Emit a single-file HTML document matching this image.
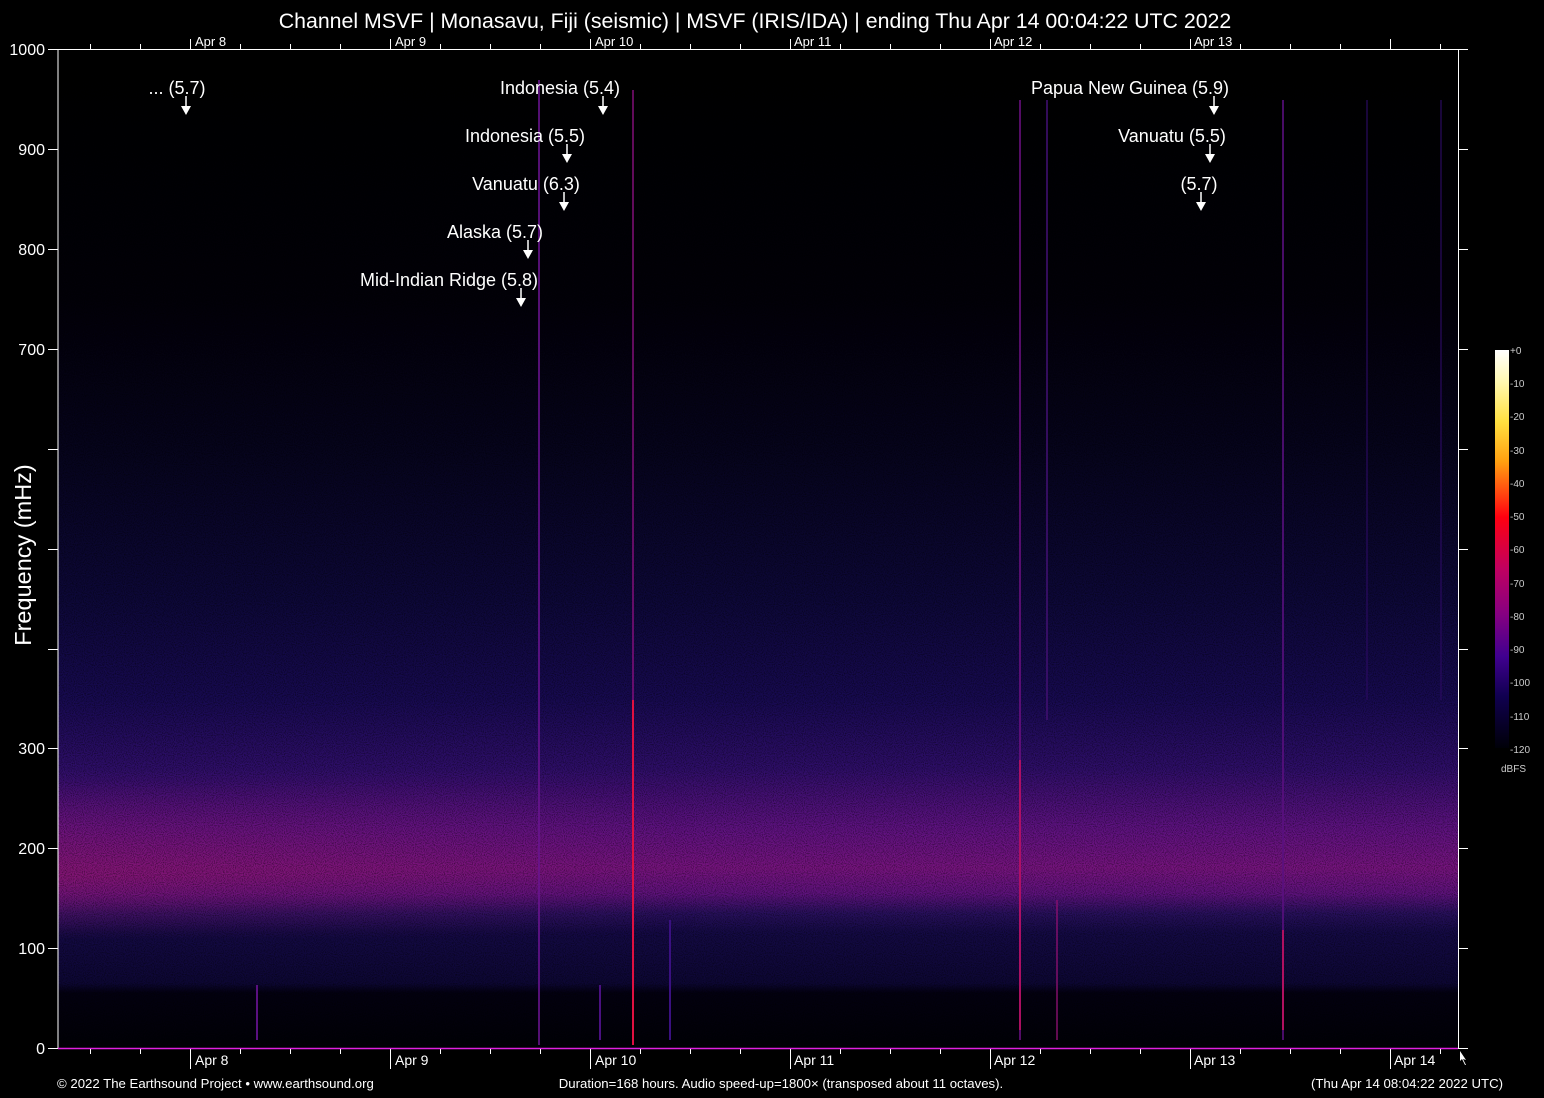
<!DOCTYPE html>
<html><head><meta charset="utf-8"><style>
html,body{margin:0;padding:0;background:#000;width:1544px;height:1098px;overflow:hidden}
svg{display:block}
text{font-family:"Liberation Sans",sans-serif;fill:#fff}
</style></head><body>
<svg width="1544" height="1098" viewBox="0 0 1544 1098" xmlns="http://www.w3.org/2000/svg">
<defs>
<linearGradient id="bg" x1="0" y1="49" x2="0" y2="1048" gradientUnits="userSpaceOnUse">
<stop offset="0" stop-color="#000"/>
<stop offset="0.25" stop-color="#020008"/>
<stop offset="0.40" stop-color="#06041c"/>
<stop offset="0.55" stop-color="#0d0838"/>
<stop offset="0.65" stop-color="#170a50"/>
<stop offset="0.72" stop-color="#2e0e68"/>
<stop offset="0.78" stop-color="#5e1280"/>
<stop offset="0.82" stop-color="#76147e"/>
<stop offset="0.845" stop-color="#5e127c"/>
<stop offset="0.865" stop-color="#28105c"/>
<stop offset="0.885" stop-color="#140a44"/>
<stop offset="0.935" stop-color="#0d0734"/>
<stop offset="0.945" stop-color="#030010"/>
<stop offset="1" stop-color="#010006"/>
</linearGradient>
<linearGradient id="lb" x1="0" y1="780" x2="0" y2="940" gradientUnits="userSpaceOnUse">
<stop offset="0" stop-color="#7a1478" stop-opacity="0"/>
<stop offset="0.6" stop-color="#8a1670" stop-opacity="0.7"/>
<stop offset="1" stop-color="#7a1478" stop-opacity="0"/>
</linearGradient>
<linearGradient id="lx" x1="58" x2="700" y1="0" y2="0" gradientUnits="userSpaceOnUse">
<stop offset="0" stop-color="#fff"/><stop offset="1" stop-color="#000"/>
</linearGradient>
<mask id="lm"><rect x="58" y="49" width="700" height="999" fill="url(#lx)"/></mask>
<filter id="nz" x="0" y="0" width="100%" height="100%">
<feTurbulence type="fractalNoise" baseFrequency="0.9" numOctaves="1" seed="3"/>
<feColorMatrix values="0 0 0 0 0  0 0 0 0 0  0 0 0 0 0  0 0 0 -2.2 1.3"/>
</filter>
</defs>
<rect x="58" y="49" width="1400" height="999" fill="url(#bg)"/>
<rect x="58" y="780" width="700" height="160" fill="url(#lb)" mask="url(#lm)"/>
<rect x="58" y="49" width="1400" height="999" filter="url(#nz)" opacity="0.55"/>
<g stroke-width="2">
<line x1="539" y1="80" x2="539" y2="1045" stroke="#6a1490" opacity="0.8"/>
<line x1="633" y1="90" x2="633" y2="1045" stroke="#8a1080" opacity="0.7"/>
<line x1="633" y1="700" x2="633" y2="1045" stroke="#e01040"/>
<line x1="1020" y1="100" x2="1020" y2="1040" stroke="#6a1080" opacity="0.8"/>
<line x1="1020" y1="760" x2="1020" y2="1030" stroke="#c01060" opacity="0.8"/>
<line x1="1047" y1="100" x2="1047" y2="720" stroke="#401070" opacity="0.8"/>
<line x1="1057" y1="900" x2="1057" y2="1040" stroke="#8a1070" opacity="0.7"/>
<line x1="1283" y1="100" x2="1283" y2="1040" stroke="#5a1080" opacity="0.8"/>
<line x1="1283" y1="930" x2="1283" y2="1030" stroke="#b01060"/>
<line x1="1367" y1="100" x2="1367" y2="700" stroke="#2a0a60" opacity="0.6"/>
<line x1="1441" y1="100" x2="1441" y2="700" stroke="#2a0a60" opacity="0.6"/>
<line x1="257" y1="985" x2="257" y2="1040" stroke="#5a1080"/>
<line x1="600" y1="985" x2="600" y2="1040" stroke="#4a1080"/>
<line x1="670" y1="920" x2="670" y2="1040" stroke="#3a1080"/>
</g>
<g stroke="#fff" stroke-width="1" fill="none">
<line x1="58" y1="49" x2="58" y2="1048"/>
<line x1="1458.5" y1="49" x2="1458.5" y2="1048"/>
<line x1="48" y1="49.5" x2="1468" y2="49.5"/>
<line x1="48" y1="149.5" x2="58" y2="149.5"/><line x1="48" y1="249.5" x2="58" y2="249.5"/>
<line x1="48" y1="349.5" x2="58" y2="349.5"/><line x1="48" y1="449.5" x2="58" y2="449.5"/>
<line x1="48" y1="549.5" x2="58" y2="549.5"/><line x1="48" y1="649.5" x2="58" y2="649.5"/>
<line x1="48" y1="748.5" x2="58" y2="748.5"/><line x1="48" y1="848.5" x2="58" y2="848.5"/>
<line x1="48" y1="948.5" x2="58" y2="948.5"/><line x1="48" y1="1048.5" x2="58" y2="1048.5"/>
<line x1="1458" y1="149.5" x2="1468" y2="149.5"/><line x1="1458" y1="249.5" x2="1468" y2="249.5"/>
<line x1="1458" y1="349.5" x2="1468" y2="349.5"/><line x1="1458" y1="449.5" x2="1468" y2="449.5"/>
<line x1="1458" y1="549.5" x2="1468" y2="549.5"/><line x1="1458" y1="649.5" x2="1468" y2="649.5"/>
<line x1="1458" y1="748.5" x2="1468" y2="748.5"/><line x1="1458" y1="848.5" x2="1468" y2="848.5"/>
<line x1="1458" y1="948.5" x2="1468" y2="948.5"/><line x1="1458" y1="1048.5" x2="1468" y2="1048.5"/>
</g>
<line x1="58" y1="1048.5" x2="1458" y2="1048.5" stroke="#e020e0" stroke-width="1.5"/>
<g stroke="#fff" stroke-width="1">
<path d="M90.5 49v-5M140.5 49v-5M190.5 49v-10M240.5 49v-5M290.5 49v-5M340.5 49v-5M390.5 49v-10M440.5 49v-5M490.5 49v-5M540.5 49v-5M590.5 49v-10M640.5 49v-5M690.5 49v-5M740.5 49v-5M790.5 49v-10M840.5 49v-5M890.5 49v-5M940.5 49v-5M990.5 49v-10M1040.5 49v-5M1090.5 49v-5M1140.5 49v-5M1190.5 49v-10M1240.5 49v-5M1290.5 49v-5M1340.5 49v-5M1390.5 49v-10M1440.5 49v-5"/>
<path d="M90.5 1049v5M140.5 1049v5M190.5 1049v20M240.5 1049v5M290.5 1049v5M340.5 1049v5M390.5 1049v20M440.5 1049v5M490.5 1049v5M540.5 1049v5M590.5 1049v20M640.5 1049v5M690.5 1049v5M740.5 1049v5M790.5 1049v20M840.5 1049v5M890.5 1049v5M940.5 1049v5M990.5 1049v20M1040.5 1049v5M1090.5 1049v5M1140.5 1049v5M1190.5 1049v20M1240.5 1049v5M1290.5 1049v5M1340.5 1049v5M1390.5 1049v20M1440.5 1049v5"/>
</g>
<path d="M1460 1051l6 9-3-1 3 6-1 0-3-6-2 2z" fill="#fff"/>
<g font-size="16" text-anchor="end">
<text x="45" y="55">1000</text><text x="45" y="155">900</text><text x="45" y="255">800</text>
<text x="45" y="355">700</text><text x="45" y="754">300</text><text x="45" y="854">200</text>
<text x="45" y="954">100</text><text x="45" y="1054">0</text>
</g>
<text x="31" y="555" font-size="23.5" text-anchor="middle" transform="rotate(-90 31 555)">Frequency (mHz)</text>
<text x="755" y="28" font-size="21.3" text-anchor="middle">Channel MSVF | Monasavu, Fiji (seismic) | MSVF (IRIS/IDA) | ending Thu Apr 14 00:04:22 UTC 2022</text>
<g font-size="13">
<text x="195" y="46">Apr  8</text><text x="395" y="46">Apr  9</text><text x="595" y="46">Apr 10</text>
<text x="794" y="46">Apr 11</text><text x="994" y="46">Apr 12</text><text x="1194" y="46">Apr 13</text>
</g>
<g font-size="14">
<text x="195" y="1065">Apr  8</text><text x="395" y="1065">Apr  9</text><text x="595" y="1065">Apr 10</text>
<text x="794" y="1065">Apr 11</text><text x="994" y="1065">Apr 12</text><text x="1194" y="1065">Apr 13</text>
<text x="1394" y="1065">Apr 14</text>
</g>
<g font-size="13.2">
<text x="57" y="1088">© 2022 The Earthsound Project • www.earthsound.org</text>
<text x="781" y="1088" text-anchor="middle">Duration=168 hours. Audio speed-up=1800× (transposed about 11 octaves).</text>
<text x="1503" y="1088" text-anchor="end">(Thu Apr 14 08:04:22 2022 UTC)</text>
</g>
<g font-size="18" text-anchor="middle">
<text x="177" y="94">... (5.7)</text>
<text x="560" y="94">Indonesia (5.4)</text>
<text x="525" y="142">Indonesia (5.5)</text>
<text x="526" y="190">Vanuatu (6.3)</text>
<text x="495" y="238">Alaska (5.7)</text>
<text x="449" y="286">Mid-Indian Ridge (5.8)</text>
<text x="1130" y="94">Papua New Guinea (5.9)</text>
<text x="1172" y="142">Vanuatu (5.5)</text>
<text x="1199" y="190">(5.7)</text>
</g>
<g stroke="#fff" stroke-width="1.5">
<line x1="186" y1="96" x2="186" y2="108"/><line x1="603" y1="96" x2="603" y2="108"/>
<line x1="567" y1="144" x2="567" y2="156"/><line x1="564" y1="192" x2="564" y2="204"/>
<line x1="528" y1="240" x2="528" y2="252"/><line x1="521" y1="288" x2="521" y2="300"/>
<line x1="1214" y1="96" x2="1214" y2="108"/><line x1="1210" y1="144" x2="1210" y2="156"/>
<line x1="1201" y1="192" x2="1201" y2="204"/>
</g>
<g fill="#fff">
<path d="M181 106h10l-5 9z"/><path d="M598 106h10l-5 9z"/>
<path d="M562 154h10l-5 9z"/><path d="M559 202h10l-5 9z"/>
<path d="M523 250h10l-5 9z"/><path d="M516 298h10l-5 9z"/>
<path d="M1209 106h10l-5 9z"/><path d="M1205 154h10l-5 9z"/>
<path d="M1196 202h10l-5 9z"/>
</g>
<defs><linearGradient id="cb" x1="0" y1="0" x2="0" y2="1">
<stop offset="0" stop-color="#ffffff"/><stop offset="0.08" stop-color="#fff8b0"/>
<stop offset="0.18" stop-color="#ffe040"/><stop offset="0.28" stop-color="#ffa010"/>
<stop offset="0.38" stop-color="#ff3010"/><stop offset="0.42" stop-color="#ff0010"/>
<stop offset="0.55" stop-color="#c00060"/><stop offset="0.66" stop-color="#880080"/>
<stop offset="0.77" stop-color="#400090"/><stop offset="0.87" stop-color="#100050"/>
<stop offset="1" stop-color="#000008"/></linearGradient></defs>
<rect x="1495" y="350" width="14" height="398" fill="url(#cb)"/>
<g font-size="10" style="fill:#ccc">
<text x="1510" y="354" style="fill:#ccc">+0</text><text x="1510" y="387" style="fill:#ccc">-10</text><text x="1510" y="420" style="fill:#ccc">-20</text>
<text x="1510" y="454" style="fill:#ccc">-30</text><text x="1510" y="487" style="fill:#ccc">-40</text><text x="1510" y="520" style="fill:#ccc">-50</text>
<text x="1510" y="553" style="fill:#ccc">-60</text><text x="1510" y="587" style="fill:#ccc">-70</text><text x="1510" y="620" style="fill:#ccc">-80</text>
<text x="1510" y="653" style="fill:#ccc">-90</text><text x="1510" y="686" style="fill:#ccc">-100</text><text x="1510" y="720" style="fill:#ccc">-110</text>
<text x="1510" y="753" style="fill:#ccc">-120</text><text x="1501" y="772" style="fill:#ccc">dBFS</text>
</g>
</svg>
</body></html>
